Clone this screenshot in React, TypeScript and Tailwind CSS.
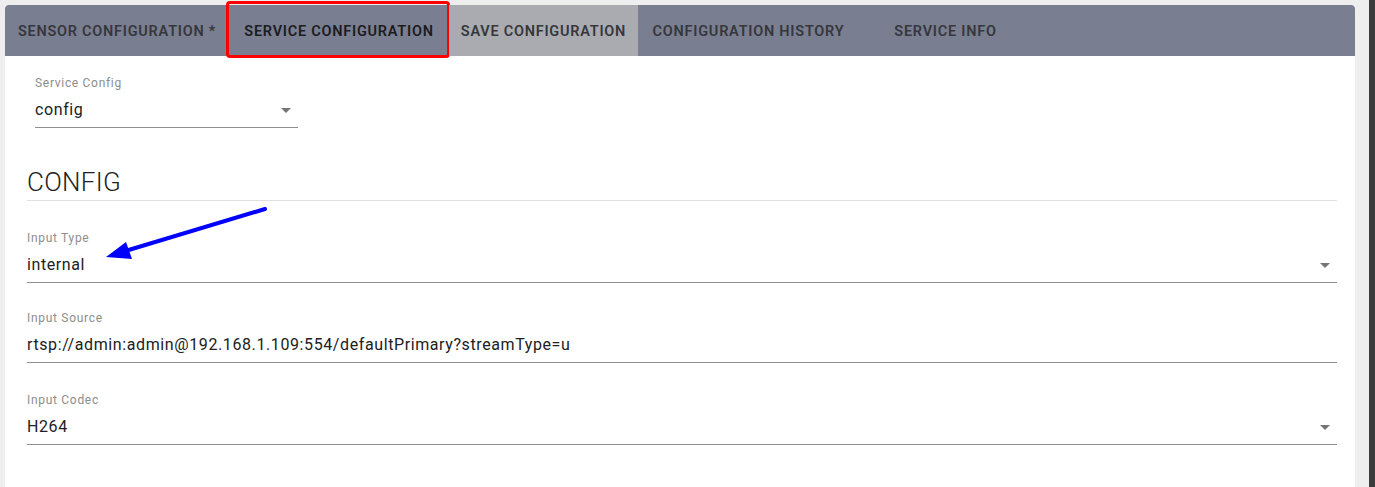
import React from "react";

const Caret = () => (
  <div className="h-0 w-0 border-l-[5px] border-r-[5px] border-t-[5px] border-l-transparent border-r-transparent border-t-[#757575]" />
);

function Field({
  label,
  value,
  select,
  className = "",
}: {
  label: string;
  value: string;
  select?: boolean;
  className?: string;
}) {
  return (
    <div className={"border-b border-[#8f8f8f] pb-[5px] " + className}>
      <div className="text-[12px] leading-[16px] tracking-[0.7px] text-[#8d8d8d]">{label}</div>
      <div className="mt-[7px] flex h-[24px] items-center justify-between pr-[7px]">
        <span className="text-[16px] leading-[24px] tracking-[0.6px] text-[#212121]">{value}</span>
        {select && (
          <div className="mt-[1px]">
            <Caret />
          </div>
        )}
      </div>
    </div>
  );
}

const tabs = [
  { label: "SENSOR CONFIGURATION *", w: "w-[224px]", cls: "text-[#36373d]" },
  { label: "SERVICE CONFIGURATION", w: "w-[220px]", cls: "text-[#1c1c1f]", active: true },
  { label: "SAVE CONFIGURATION", w: "w-[189px]", cls: "text-[#36373d] bg-[#aaabb0]" },
  { label: "CONFIGURATION HISTORY", w: "w-[221px]", cls: "text-[#36373d]" },
  { label: "SERVICE INFO", w: "w-[173px]", cls: "text-[#36373d]" },
];

export default function App() {
  return (
    <div
      className="relative flex h-[487px] w-full overflow-hidden bg-[#eeeeee]"
      style={{ fontFamily: "Roboto, 'Noto Sans', sans-serif" }}
    >
      <div className="flex flex-1 pl-[5px] pt-[5px]">
        <div className="flex w-[1350px] flex-col bg-white">
          {/* Tab bar */}
          <div className="flex h-[51px] rounded-t-[4px] bg-[#797e91]">
            {tabs.map((t) => (
              <div
                key={t.label}
                className={
                  "relative flex h-full shrink-0 items-center justify-center pt-[2px] text-[14.5px] font-semibold tracking-[0.75px] " +
                  t.w +
                  " " +
                  t.cls
                }
              >
                {t.label}
                {t.active && (
                  <div className="pointer-events-none absolute -left-[3px] -top-[4px] -right-[1px] -bottom-[2px] rounded-[4px] border-[3px] border-[#ff0000]" />
                )}
              </div>
            ))}
          </div>

          {/* Content */}
          <div className="flex flex-col pl-[22px] pr-[18px]">
            <div className="pl-[8px] pt-[19px]">
              <Field label="Service Config" value="config" select className="w-[263px]" />
            </div>

            <div className="mt-[38px] border-b border-[#e0e0e0] pb-[2px]">
              <div className="text-[26px] font-light leading-[32px] tracking-[0.3px] text-[#212121]">CONFIG</div>
            </div>

            <Field label="Input Type" value="internal" select className="mt-[29px]" />
            <Field
              label="Input Source"
              value="rtsp://admin:admin@192.168.1.109:554/defaultPrimary?streamType=u"
              className="mt-[27px]"
            />
            <Field label="Input Codec" value="H264" select className="mt-[29px]" />
          </div>
        </div>
      </div>
      <div className="ml-[14px] w-[6px] shrink-0 bg-[#3b3b3b]" />

      {/* Annotation arrow */}
      <svg
        className="pointer-events-none absolute left-0 top-0"
        width="1375"
        height="487"
        viewBox="0 0 1375 487"
      >
        <line x1="265" y1="209" x2="122" y2="252" stroke="#0000ff" strokeWidth="4" strokeLinecap="round" />
        <polygon points="106,257 126,242 132,259" fill="#0000ff" />
      </svg>
    </div>
  );
}
